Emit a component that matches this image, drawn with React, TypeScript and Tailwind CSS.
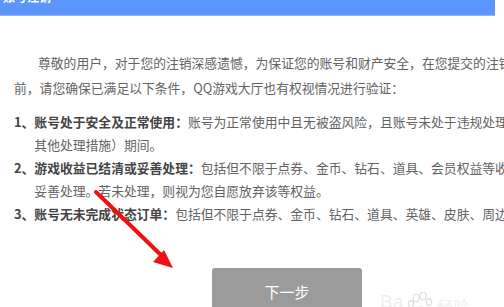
import React from "react";

const cjk = { fontFamily: '"Noto Sans CJK SC", "Noto Sans", sans-serif' };

function Arrow() {
  return (
    <svg className="pointer-events-none absolute left-0 top-0" width="504" height="307" viewBox="0 0 504 307">
      <line x1="96" y1="192" x2="163" y2="257" stroke="#f01010" strokeWidth="4" strokeLinecap="round" />
      <polygon points="173,268 153,262 164,250" fill="#f01010" />
    </svg>
  );
}

function Watermark() {
  return (
    <div className="pointer-events-none absolute left-[380px] top-[292px] flex items-start text-[#efefef]">
      <span className="text-[19px] leading-none" style={{ fontFamily: '"Liberation Sans", sans-serif' }}>Ba</span>
      <svg className="ml-[2px]" width="32" height="20" viewBox="0 0 32 20" fill="none" stroke="#dcdcdc" strokeWidth="1.1">
        <ellipse cx="11" cy="6" rx="3" ry="4" />
        <ellipse cx="18" cy="4" rx="3" ry="4" />
        <ellipse cx="6" cy="12" rx="2.6" ry="3.4" />
        <ellipse cx="24" cy="10" rx="2.6" ry="3.4" />
        <path d="M9 20 C10 14 20 13 22 20" />
      </svg>
      <span className="mt-[6px] text-[16px] leading-none" style={cjk}>经验</span>
    </div>
  );
}

type Item = { no: string; title: string; text: string; more?: string };

const items: Item[] = [
  {
    no: "1、",
    title: "账号处于安全及正常使用：",
    text: "账号为正常使用中且无被盗风险，且账号未处于违规处理（包括但不限于封号、冻结、禁言等",
    more: "其他处理措施）期间。",
  },
  {
    no: "2、",
    title: "游戏收益已结清或妥善处理：",
    text: "包括但不限于点券、金币、钻石、道具、会员权益等收益均已结清或",
    more: "妥善处理。若未处理，则视为您自愿放弃该等权益。",
  },
  {
    no: "3、",
    title: "账号无未完成状态订单：",
    text: "包括但不限于点券、金币、钻石、道具、英雄、皮肤、周边等订单。",
  },
];

export default function App() {
  return (
    <div className="relative h-[307px] w-[504px] overflow-hidden bg-white" style={cjk}>
      <div className="flex h-[16px] w-[495px] items-end overflow-hidden border-b border-[#8fb6fb] bg-[#5c96fa] pl-[3px]">
        <span className="mb-[12px] text-[12px] font-bold leading-none text-white">账号注销</span>
      </div>

      <div className="pl-[14px] pt-[34px] text-[12.8px] text-[#636363]">
        <div className="whitespace-nowrap leading-[25px]">
          <div className="pl-[24px]">尊敬的用户，对于您的注销深感遗憾，为保证您的账号和财产安全，在您提交的注销申请生效前</div>
          <div>前，请您确保已满足以下条件，QQ游戏大厅也有权视情况进行验证：</div>
        </div>

        <div className="mt-[10px] flex flex-col leading-[23px]">
          {items.map((it) => (
            <div key={it.no} className="flex whitespace-nowrap">
              <span className="font-bold text-[#444]">{it.no}</span>
              <div>
                <div>
                  <span className="font-bold text-[#444]">{it.title}</span>
                  {it.text}
                </div>
                {it.more && <div>{it.more}</div>}
              </div>
            </div>
          ))}
        </div>

        <div className="mt-[43px] pl-[198px]">
          <button className="flex h-[48px] w-[150px] items-center justify-center rounded-t-[3px] bg-[#9b9b9b] text-[15px] text-white">
            下一步
          </button>
        </div>
      </div>

      <Watermark />
      <Arrow />
    </div>
  );
}
